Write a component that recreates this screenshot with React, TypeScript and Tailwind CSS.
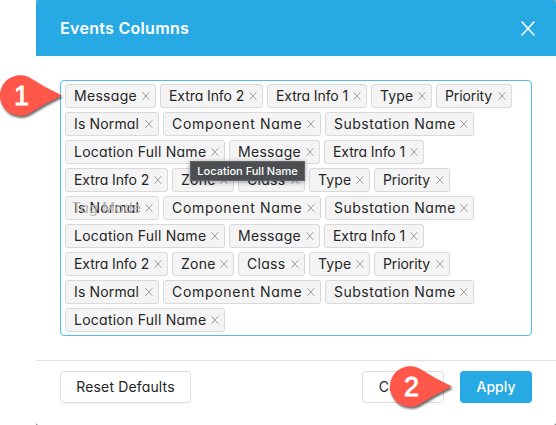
const TAGS: Record<string, string> = {
  'Message': 'w-[91px] tracking-[0.3px]',
  'Extra Info 2': 'w-[103px] tracking-[-0.08px]',
  'Extra Info 1': 'w-[100px] tracking-[-0.1px]',
  'Type': 'w-[61px] tracking-[0.1px]',
  'Priority': 'w-[76px] tracking-[-0.1px]',
  'Is Normal': 'w-[94px] tracking-[0.15px]',
  'Component Name': 'w-[158px] tracking-[0.7px]',
  'Substation Name': 'w-[149px] tracking-[0.5px]',
  'Location Full Name': 'w-[160px] tracking-[0.25px]',
  'Zone': 'w-[62px] tracking-[0.3px]',
  'Class': 'w-[67px] tracking-[0.3px]',
};

const ROWS: string[][] = [
  ['Message', 'Extra Info 2', 'Extra Info 1', 'Type', 'Priority'],
  ['Is Normal', 'Component Name', 'Substation Name'],
  ['Location Full Name', 'Message', 'Extra Info 1'],
  ['Extra Info 2', 'Zone', 'Class', 'Type', 'Priority'],
  ['Is Normal', 'Component Name', 'Substation Name'],
  ['Location Full Name', 'Message', 'Extra Info 1'],
  ['Extra Info 2', 'Zone', 'Class', 'Type', 'Priority'],
  ['Is Normal', 'Component Name', 'Substation Name'],
  ['Location Full Name'],
];

function Tag({ label }: { label: string }) {
  return (
    <div className={`flex h-6 shrink-0 items-center justify-between rounded-[3px] border border-[#d9d9d9] bg-[#f4f4f4] pr-[5px] pl-2 ${TAGS[label]}`}>
      <span className="pb-px leading-[21px] whitespace-nowrap">{label}</span>
      <svg className="h-2 w-[8px] shrink-0" viewBox="0 0 8 8" fill="none" stroke="#999999" strokeWidth="0.95">
        <path d="M.5 .2 7.3 7.8M7.3 .2 .5 7.8" />
      </svg>
    </div>
  );
}

function Marker({ n, className }: { n: number; className: string }) {
  return (
    <div className={`absolute h-[46px] w-[66px] ${className}`}>
      <svg className="absolute inset-0 overflow-visible drop-shadow-[1px_2px_1px_rgba(0,0,0,0.6)]" width="66" height="46" viewBox="0 0 66 46">
        <path d="M62 20.5Q44 29 29 38.8A20.3 20.3 0 1 1 29 2.2Q44 12 62 20.5Z" fill="#ff584b" />
      </svg>
      <span className="absolute top-0 left-0 h-[41px] w-[43px] text-center font-['Liberation_Sans',sans-serif] text-[27px] leading-[42px] text-white [-webkit-text-stroke:0.8px_white]">{n}</span>
    </div>
  );
}

export default function App() {
  return (
    <div className="relative h-[425px] w-[556px] overflow-hidden bg-white pl-9 font-['Inter',sans-serif] text-[14px] text-[#262626] [font-feature-settings:'cv11']">
      <div className="h-[425px] w-[520px] bg-[#858585]">
        <div className="flex h-[425px] flex-col overflow-hidden rounded-[3px] bg-white">
          <header className="flex h-14 items-center justify-between bg-[#27aae3] pr-[21px] pl-6 text-white">
            <h1 className="pb-px text-[16px] font-semibold tracking-[0.3px]">Events Columns</h1>
            <svg width="14" height="15" viewBox="0 0 14 15" fill="none" stroke="white" strokeWidth="1.5">
              <path d="M.6 .6 13.4 14.4M13.4 .6 .6 14.4" />
            </svg>
          </header>
          <main className="h-[304px] px-6 pt-6">
            <div className="flex h-64 w-[472px] flex-col gap-1 rounded-[4px] border border-[#4dc0ec] px-1 pt-[3px]">
              {ROWS.map((row, i) => (
                <div key={i} className="flex gap-1">
                  {row.map((label) => <Tag key={label} label={label} />)}
                </div>
              ))}
            </div>
          </main>
          <footer className="flex h-[65px] border-t border-[#e1e1e1] px-6 pt-2.5">
            <button className="h-8 w-[131px] rounded-[4px] border border-[#dedede] pb-px tracking-[0.15px] shadow-[0_1px_1px_rgba(0,0,0,0.03)]">Reset Defaults</button>
            <button className="ml-auto h-8 w-[82px] rounded-[4px] border border-[#dedede] pb-px tracking-[0.3px]">Cancel</button>
            <button className="ml-4 h-8 w-[72px] rounded-[4px] bg-[#27aae3] pb-px font-medium text-white">Apply</button>
          </footer>
        </div>
      </div>
      <span className="absolute top-[198px] left-[72px] leading-5 tracking-[0.3px] whitespace-nowrap text-[#b5b5b5]">Tag Mode</span>
      <div className="absolute top-[161px] left-[190px] flex h-5 w-[115px] items-center justify-center border border-[#626568] bg-[#4b4f52] text-[11px] font-medium whitespace-nowrap text-white shadow-[0_1px_5px_rgba(0,0,0,0.4)] [font-feature-settings:normal]">Location Full Name</div>
      <Marker n={1} className="top-[75px] left-0" />
      <Marker n={2} className="top-[366px] left-[390px]" />
    </div>
  );
}
